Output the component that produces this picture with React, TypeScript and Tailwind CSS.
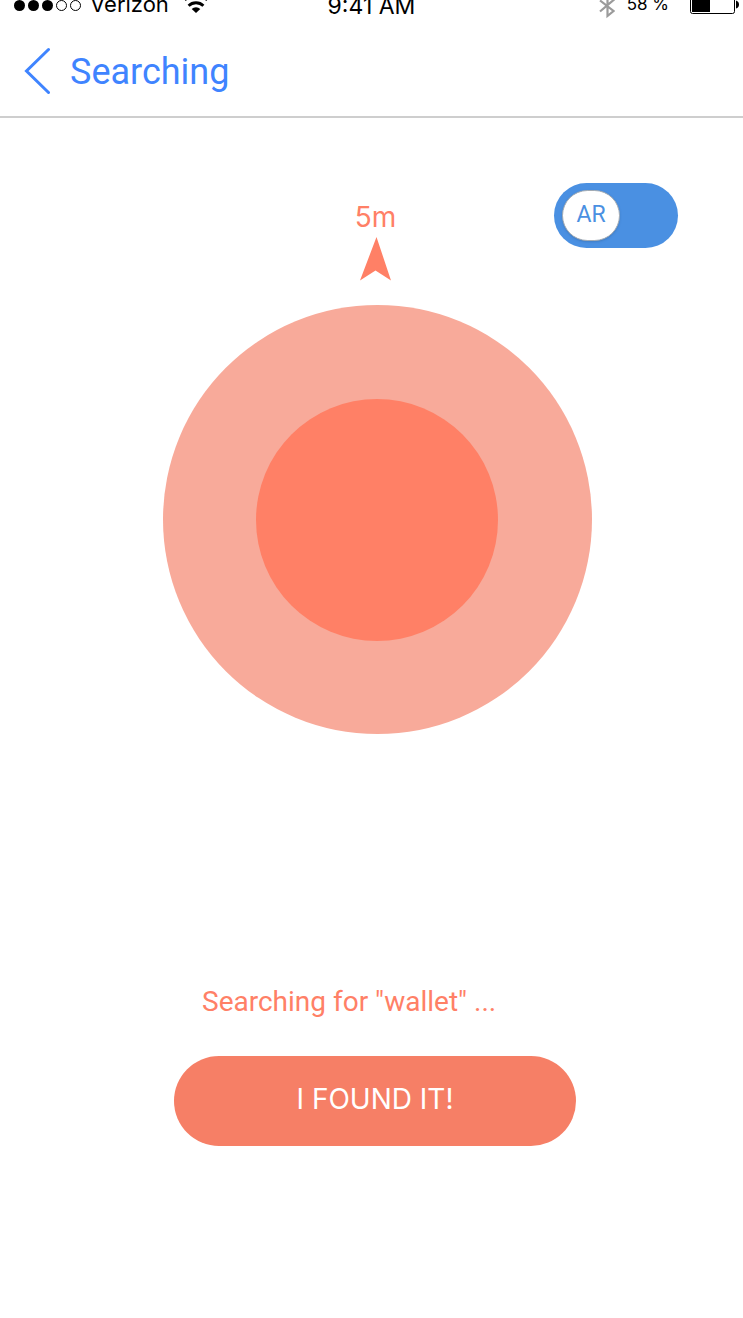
import { useState } from "react";

function StatusBar() {
  return (
    <div className="flex h-5 flex-col justify-end overflow-hidden text-black">
      <div className="grid grid-cols-[1fr_auto_1fr] items-end">
        <div className="flex items-end pl-3.5">
          <svg width="68" height="20" viewBox="0 0 68 20" aria-hidden="true">
            <circle cx="5.5" cy="5.5" r="5.5" />
            <circle cx="19.5" cy="5.5" r="5.5" />
            <circle cx="33.5" cy="5.5" r="5.5" />
            <circle cx="47.5" cy="5.5" r="5" fill="none" stroke="currentColor" strokeWidth="1" />
            <circle cx="61.5" cy="5.5" r="5" fill="none" stroke="currentColor" strokeWidth="1" />
          </svg>
          <span className="pl-2 text-[22px] leading-8">Verizon</span>
          <svg className="ml-3.5" width="26" height="20" viewBox="0 0 26 20" aria-hidden="true">
            <g fill="none" stroke="currentColor" strokeWidth="2.8">
              <path d="M1.8 0A16 16 0 0 1 24.200 0" />
              <path d="M5.600 5.800A10.500 10.500 0 0 1 20.400 5.800" />
            </g>
            <path d="M13 13L8.700 8.900A6.200 6.200 0 0 1 17.300 8.900Z" />
          </svg>
        </div>
        <span className="text-[23px] leading-7">9:41 AM</span>
        <div className="flex items-end justify-end pr-1">
          <svg width="16" height="20" viewBox="0 0 16 20" fill="none" stroke="#9b9b9b" strokeWidth="2.2" aria-hidden="true">
            <path d="M1 0.500L14.500 11L8.500 16V-5L14.500 0L1 11.500" />
          </svg>
          <span className="pl-3 text-[17px] leading-8">58 %</span>
          <svg className="ml-5" width="50" height="20" viewBox="0 0 50 20" aria-hidden="true">
            <rect x="1.500" y="-8.500" width="44" height="22" rx="2" fill="none" stroke="currentColor" />
            <rect x="3" y="-7" width="18" height="19" />
            <path d="M47 0.500Q50 1.500 50 4.500Q50 7.500 47 8.500Z" />
          </svg>
        </div>
      </div>
    </div>
  );
}

function ArToggle() {
  const [ar, setAr] = useState(false);
  return (
    <label className="flex h-[65px] w-[124px] cursor-pointer rounded-full bg-[#4a90e2] px-2 py-[7px] has-checked:justify-end">
      <input
        type="checkbox"
        role="switch"
        className="sr-only"
        checked={ar}
        onChange={(e) => setAr(e.target.checked)}
      />
      <span className="flex w-[58px] items-center justify-center rounded-[26px] border border-[#a3abb3] bg-white pb-0.5 font-['Roboto',sans-serif] text-[23px] leading-7 text-[#4a90e2] shadow-sm">
        AR
      </span>
    </label>
  );
}

export default function App() {
  return (
    <div className="min-h-screen bg-white font-['Inter',sans-serif]">
      <StatusBar />
      <header className="flex h-[98px] items-center border-b-2 border-[#cecece] pt-1.5 pl-6">
        <a href="#back" className="flex items-center gap-5 font-['Roboto',sans-serif] text-[36px] leading-10 text-[#3f84ff]">
          <svg width="26" height="48" viewBox="0 0 26 48" fill="none" stroke="currentColor" strokeWidth="3" strokeLinecap="round" aria-hidden="true">
            <path d="M24.500 2.500L2.500 24L24.500 45.500" />
          </svg>
          <h1 className="pt-0.5">Searching</h1>
        </a>
      </header>
      <main className="flex flex-col pt-[65px] text-[#ff8066]">
        <section className="grid grid-cols-[1fr_auto_1fr] items-start pl-2">
          <div className="col-start-2 flex flex-col items-center gap-0.5 pt-4">
            <span className="text-[28px] leading-9">5m</span>
            <svg width="32" height="44" viewBox="0 0 32 44" fill="currentColor" aria-hidden="true">
              <path d="M16.500 0L31 43.500L15.500 33.500L0 43.500Z" />
            </svg>
          </div>
          <div className="flex justify-end pr-[65px]">
            <ArToggle />
          </div>
        </section>
        <section className="flex justify-center pt-6 pl-[11px]">
          <div className="flex size-[429px] items-center justify-center rounded-full bg-[#f8aa9a]">
            <div className="size-[242px] rounded-full bg-[#ff8066]" />
          </div>
        </section>
        <section className="flex justify-center pt-[250px] pl-[7px]">
          <div className="flex w-[402px] flex-col gap-9">
            <p className="pl-7 font-['Roboto',sans-serif] text-[28px] leading-9">Searching for "wallet" ...</p>
            <button type="button" className="h-[90px] rounded-full bg-[#f67f66] pb-1 text-[28px] leading-9 text-white">
              I FOUND IT!
            </button>
          </div>
        </section>
      </main>
    </div>
  );
}
